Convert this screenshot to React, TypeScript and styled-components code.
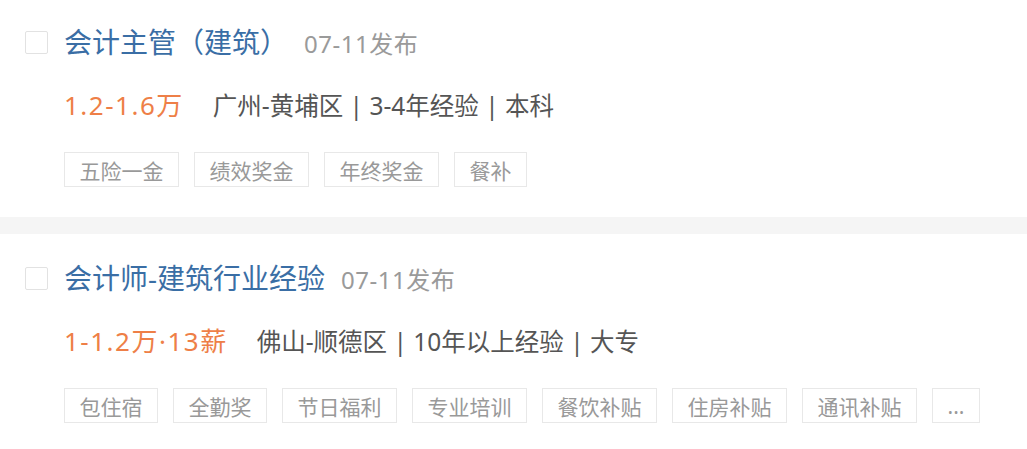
import React from "react"
import styled, { createGlobalStyle } from "styled-components"

const GlobalStyle = createGlobalStyle`
  html, body {
    margin: 0;
    padding: 0;
    background: #fff;
  }
  body {
    font-family: "Noto Sans", "Noto Sans CJK SC", sans-serif;
  }
`

interface Job {
  id: number
  title: string
  date: string
  salary: string
  info: string[]
  tags: string[]
}

const jobs: Job[] = [
  {
    id: 1,
    title: "会计主管（建筑）",
    date: "07-11发布",
    salary: "1.2-1.6万",
    info: ["广州-黄埔区", "3-4年经验", "本科"],
    tags: ["五险一金", "绩效奖金", "年终奖金", "餐补"],
  },
  {
    id: 2,
    title: "会计师-建筑行业经验",
    date: "07-11发布",
    salary: "1-1.2万·13薪",
    info: ["佛山-顺德区", "10年以上经验", "大专"],
    tags: ["包住宿", "全勤奖", "节日福利", "专业培训", "餐饮补贴", "住房补贴", "通讯补贴", "..."],
  },
]

const JobCard: React.FC<{ job: Job }> = ({ job }) => (
  <S.Card>
    <S.Checkbox />
    <S.Body>
      <S.TitleRow>
        <S.Title>{job.title}</S.Title>
        <S.Date>{job.date}</S.Date>
      </S.TitleRow>
      <S.MetaRow>
        <S.Salary>{job.salary}</S.Salary>
        <S.Info>{job.info.join(" | ")}</S.Info>
      </S.MetaRow>
      <S.Tags>
        {job.tags.map((t) => (
          <S.Tag key={t}>{t}</S.Tag>
        ))}
      </S.Tags>
    </S.Body>
  </S.Card>
)

export default function App() {
  return (
    <>
      <GlobalStyle />
      <S.List>
        {jobs.map((j) => (
          <JobCard key={j.id} job={j} />
        ))}
      </S.List>
    </>
  )
}

const S = {
  List: styled.div`
    display: flex;
    flex-direction: column;
    width: 1027px;
    background: #fff;
  `,
  Card: styled.div`
    display: flex;
    align-items: flex-start;
    gap: 16px;
    padding: 21px 25px 30px;
    & + & {
      border-top: 17px solid #f5f5f5;
      padding-top: 23px;
      padding-bottom: 25px;
    }
  `,
  Checkbox: styled.span`
    flex: none;
    width: 21px;
    height: 21px;
    margin-top: 10px;
    border: 1px solid #e2e2e2;
    border-radius: 2px;
    background: #fff;
  `,
  Body: styled.div`
    display: flex;
    flex-direction: column;
  `,
  TitleRow: styled.div`
    display: flex;
    align-items: baseline;
    height: 42px;
    line-height: 42px;
  `,
  Title: styled.span`
    font-size: 28px;
    color: #3a6ea5;
  `,
  Date: styled.span`
    margin-left: 16px;
    font-size: 24px;
    letter-spacing: 0.5px;
    color: #9a9a9a;
  `,
  MetaRow: styled.div`
    display: flex;
    align-items: baseline;
    gap: 29px;
    margin-top: 23px;
    height: 38px;
    line-height: 38px;
  `,
  Salary: styled.span`
    font-size: 26px;
    letter-spacing: 1.5px;
    color: #ee7f47;
  `,
  Info: styled.span`
    font-size: 24.5px;
    color: #555;
  `,
  Tags: styled.div`
    display: flex;
    gap: 15px;
    margin-top: 28px;
  `,
  Tag: styled.span`
    display: flex;
    align-items: center;
    height: 33px;
    padding: 0 14.5px;
    border: 1px solid #e8e8e8;
    font-size: 21px;
    color: #999;
  `,
}
